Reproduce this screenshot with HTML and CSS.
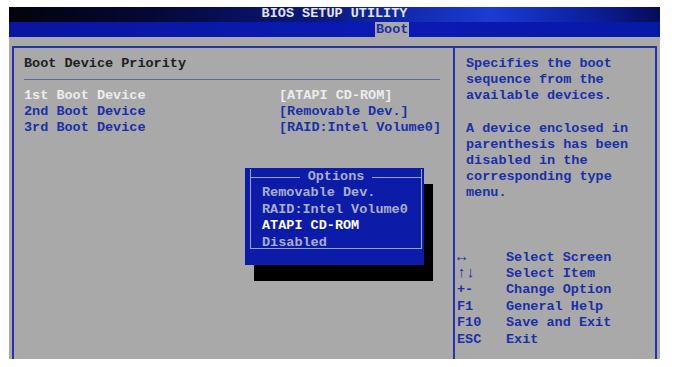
FILE: index.html
```
<!DOCTYPE html>
<html lang="en">
<head>
    <meta charset="UTF-8">
    <title>BIOS Setup Utility - Boot</title>
    <link rel="stylesheet" href="styles.css">
</head>
<body>
    <div class="bios">
        <div class="title-bar">BIOS SETUP UTILITY</div>
        <div class="menu-bar">
            <span class="tab active">Boot</span>
        </div>

        <div class="main">
            <div class="frame">
                <!-- left pane: boot priority list -->
                <div class="left-pane">
                    <div class="heading">Boot Device Priority</div>
                    <div class="rule"></div>
                    <div class="rows">
                        <div class="row selected">
                            <span class="label">1st Boot Device</span>
                            <span class="value">[ATAPI CD-ROM]</span>
                        </div>
                        <div class="row">
                            <span class="label">2nd Boot Device</span>
                            <span class="value">[Removable Dev.]</span>
                        </div>
                        <div class="row">
                            <span class="label">3rd Boot Device</span>
                            <span class="value">[RAID:Intel Volume0]</span>
                        </div>
                    </div>
                </div>

                <!-- right pane: help text and keys -->
                <div class="right-pane">
                    <div class="help">
                        <p>Specifies the boot<br>sequence from the<br>available devices.</p>
                        <p>A device enclosed in<br>parenthesis has been<br>disabled in the<br>corresponding type<br>menu.</p>
                    </div>
                    <div class="keys">
                        <div class="key"><span class="k arrow">&harr;</span><span>Select Screen</span></div>
                        <div class="key"><span class="k arrow">&uarr;&darr;</span><span>Select Item</span></div>
                        <div class="key"><span class="k">+-</span><span>Change Option</span></div>
                        <div class="key"><span class="k">F1</span><span>General Help</span></div>
                        <div class="key"><span class="k">F10</span><span>Save and Exit</span></div>
                        <div class="key"><span class="k">ESC</span><span>Exit</span></div>
                    </div>
                </div>
            </div>

            <!-- options popup lies over the list -->
            <div class="popup">
                <div class="popup-frame">
                    <div class="popup-title"><span>Options</span></div>
                    <div class="option">Removable Dev.</div>
                    <div class="option">RAID:Intel Volume0</div>
                    <div class="option current">ATAPI CD-ROM</div>
                    <div class="option">Disabled</div>
                </div>
            </div>
        </div>
    </div>
</body>
</html>
```

FILE: styles.css
```
body {
    margin: 0;
    background: #ffffff;
    font-family: "Liberation Mono", "DejaVu Sans Mono", monospace;
    font-weight: bold;
    font-size: 13.5px;
    overflow: hidden;
}

.bios {
    margin: 7px 0 0 9px;
    width: 651px;
    height: 352px;
    display: flex;
    flex-direction: column;
    background: #a9a9a9;
}

.title-bar {
    height: 15px;
    line-height: 14px;
    text-align: center;
    color: #e4e4ec;
    background: linear-gradient(to right, #02030c 0%, #040838 22%, #0a1880 48%, #1a3cd4 74%, #0c1e98 90%, #050c58 100%);
}

.menu-bar {
    height: 15px;
    background: linear-gradient(to right, #0a16a0 0%, #0a1ab4 60%, #0818a8 100%);
    padding-left: 366px;
    display: flex;
}

.tab {
    line-height: 15px;
    padding: 0 1px 0 1px;
    color: #1a2ea8;
}

.tab.active {
    background: #a9a9a9;
}

.main {
    position: relative;
    flex: 1;
    display: flex;
    padding: 9px 3px 0 3px;
}

.frame {
    flex: 1;
    display: flex;
    border: 2px solid #2234a8;
    border-bottom: none;
}

.left-pane {
    width: 416px;
    padding: 8px 13px 0 10px;
    border-right: 2px solid #2234a8;
}

.heading {
    line-height: 16px;
    color: #1e1e24;
}

.rule {
    height: 1px;
    background: #5a68a8;
    margin: 7px 0 8px 0;
}

.row {
    display: flex;
    line-height: 16.2px;
    white-space: nowrap;
    color: #1a30a8;
}

.row .label {
    width: 255px;
    flex-shrink: 0;
}

.row.selected {
    color: #ececf0;
}

.right-pane {
    flex: 1;
    display: flex;
    flex-direction: column;
    justify-content: space-between;
    padding: 8px 0 11px 0;
    color: #1a30a8;
}

.help {
    padding-left: 11px;
}

.help p {
    margin: 0 0 16px 0;
    line-height: 16.2px;
}

.keys {
    padding-left: 2px;
}

.key {
    display: flex;
    line-height: 16.4px;
}

.key .k {
    width: 49px;
}

.key .arrow {
    font-size: 15px;
    line-height: 16.4px;
}

.popup {
    position: absolute;
    left: 236px;
    top: 131px;
    width: 179px;
    height: 97px;
    background: #0c1ca8;
    box-shadow: 9px 16px 0 #000000;
    box-sizing: border-box;
    padding: 9px 2px 8px 5px;
}

.popup-frame {
    height: 100%;
    box-sizing: border-box;
    border: 1px solid #98a2cc;
    border-top: none;
    padding-left: 11px;
    white-space: nowrap;
    color: #a8b0cc;
}

.popup-title {
    display: flex;
    align-items: center;
    gap: 8px;
    margin: -8px -1px 0 -12px;
    height: 16px;
    line-height: 16px;
}

.popup-title::before,
.popup-title::after {
    content: "";
    flex: 1;
    height: 1px;
    background: #98a2cc;
}

.option {
    line-height: 16.6px;
}

.option.current {
    color: #ffffff;
}
```
